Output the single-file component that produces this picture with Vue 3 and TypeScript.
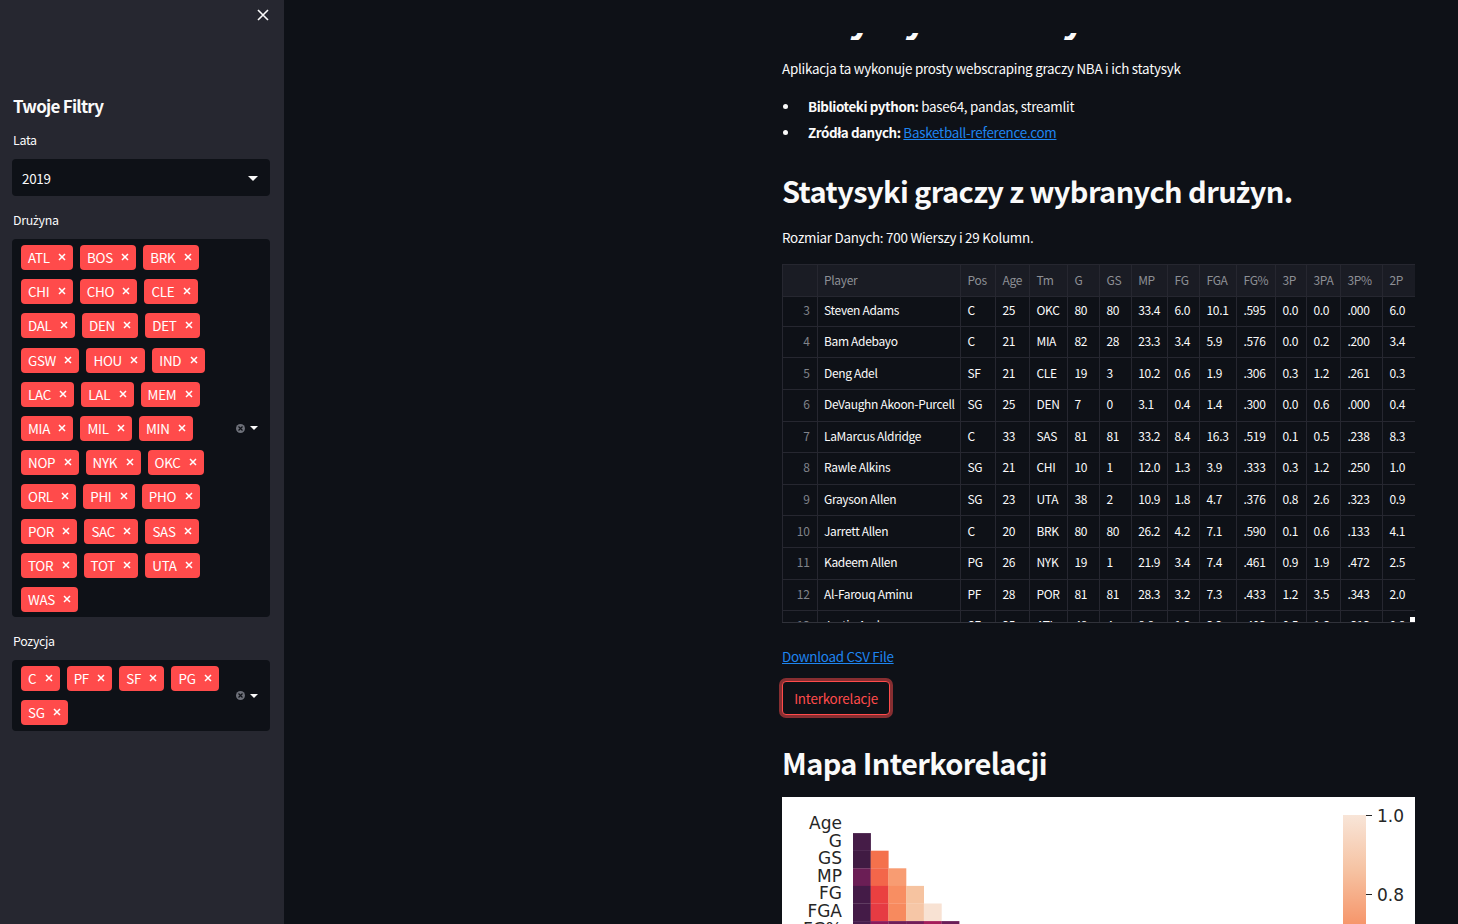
<script setup lang="ts">
const lineA = [
  ['ATL', 'BOS', 'BRK'], ['CHI', 'CHO', 'CLE'], ['DAL', 'DEN', 'DET'], ['GSW', 'HOU', 'IND'],
  ['LAC', 'LAL', 'MEM'], ['MIA', 'MIL', 'MIN'], ['NOP', 'NYK', 'OKC'], ['ORL', 'PHI', 'PHO'],
  ['POR', 'SAC', 'SAS'], ['TOR', 'TOT', 'UTA'], ['WAS'],
]
const teams = lineA.flat()
const positions = ['C', 'PF', 'SF', 'PG', 'SG']

const columns = [
  { label: '', width: 34.5 },
  { label: 'Player', width: 143.5 },
  { label: 'Pos', width: 35 },
  { label: 'Age', width: 34 },
  { label: 'Tm', width: 38 },
  { label: 'G', width: 32 },
  { label: 'GS', width: 31.7 },
  { label: 'MP', width: 36.3 },
  { label: 'FG', width: 32 },
  { label: 'FGA', width: 37 },
  { label: 'FG%', width: 39 },
  { label: '3P', width: 31 },
  { label: '3PA', width: 34 },
  { label: '3P%', width: 42 },
  { label: '2P', width: 33 },
]

const rows = [
  ['3', 'Steven Adams', 'C', '25', 'OKC', '80', '80', '33.4', '6.0', '10.1', '.595', '0.0', '0.0', '.000', '6.0'],
  ['4', 'Bam Adebayo', 'C', '21', 'MIA', '82', '28', '23.3', '3.4', '5.9', '.576', '0.0', '0.2', '.200', '3.4'],
  ['5', 'Deng Adel', 'SF', '21', 'CLE', '19', '3', '10.2', '0.6', '1.9', '.306', '0.3', '1.2', '.261', '0.3'],
  ['6', 'DeVaughn Akoon-Purcell', 'SG', '25', 'DEN', '7', '0', '3.1', '0.4', '1.4', '.300', '0.0', '0.6', '.000', '0.4'],
  ['7', 'LaMarcus Aldridge', 'C', '33', 'SAS', '81', '81', '33.2', '8.4', '16.3', '.519', '0.1', '0.5', '.238', '8.3'],
  ['8', 'Rawle Alkins', 'SG', '21', 'CHI', '10', '1', '12.0', '1.3', '3.9', '.333', '0.3', '1.2', '.250', '1.0'],
  ['9', 'Grayson Allen', 'SG', '23', 'UTA', '38', '2', '10.9', '1.8', '4.7', '.376', '0.8', '2.6', '.323', '0.9'],
  ['10', 'Jarrett Allen', 'C', '20', 'BRK', '80', '80', '26.2', '4.2', '7.1', '.590', '0.1', '0.6', '.133', '4.1'],
  ['11', 'Kadeem Allen', 'PG', '26', 'NYK', '19', '1', '21.9', '3.4', '7.4', '.461', '0.9', '1.9', '.472', '2.5'],
  ['12', 'Al-Farouq Aminu', 'PF', '28', 'POR', '81', '81', '28.3', '3.2', '7.3', '.433', '1.2', '3.5', '.343', '2.0'],
  ['13', 'Justin Anderson', 'SF', '25', 'ATL', '48', '4', '8.8', '1.3', '3.2', '.403', '0.5', '1.6', '.313', '0.8'],
]

const heatLabels = ['Age', 'G', 'GS', 'MP', 'FG', 'FGA', 'FG%']
const heatCells = [
  [],
  ['#451c47'],
  ['#401b43', '#f4714c'],
  ['#6b1e55', '#f3664a', '#f89c72'],
  ['#441b47', '#ea4040', '#f88e62', '#f6c3a0'],
  ['#441b47', '#e63b43', '#f78a5e', '#f6c6a6', '#f8e2d3'],
  ['#461c4c', '#8a1a5b', '#6e1d58', '#721c58', '#a51c5a', '#6b1e58'],
]
</script>

<template>
  <div class="page">
    <aside class="sidebar">
      <div class="sidebar__close">
        <svg width="14" height="14" viewBox="0 0 14 14" fill="none" stroke="#fafafa" stroke-width="1.6">
          <path d="M2 2l10 10M12 2L2 12" />
        </svg>
      </div>
      <h2 class="sidebar__title">Twoje Filtry</h2>

      <label class="field-label">Lata</label>
      <div class="select">
        <span>2019</span>
        <span class="caret caret--select"></span>
      </div>

      <label class="field-label field-label--team">Dru<span class="alt">ż</span>yna</label>
      <div class="multi multi--teams">
        <div class="multi__tags">
          <span v-for="t in teams" :key="t" class="tag">
            {{ t }}
            <svg class="tag__x" width="8" height="8" viewBox="0 0 8 8" fill="none" stroke="#fff" stroke-width="1.5">
              <path d="M1 1l6 6M7 1L1 7" />
            </svg>
          </span>
        </div>
        <div class="multi__controls">
          <span class="clear"><svg width="9" height="9" viewBox="0 0 9 9" fill="none" stroke="#0e1117" stroke-width="1.2"><path d="M2.5 2.5l4 4M6.5 2.5l-4 4" /></svg></span>
          <span class="caret caret--small"></span>
        </div>
      </div>

      <label class="field-label field-label--pos">Pozycja</label>
      <div class="multi multi--pos">
        <div class="multi__tags">
          <span v-for="p in positions" :key="p" class="tag">
            {{ p }}
            <svg class="tag__x" width="8" height="8" viewBox="0 0 8 8" fill="none" stroke="#fff" stroke-width="1.5">
              <path d="M1 1l6 6M7 1L1 7" />
            </svg>
          </span>
        </div>
        <div class="multi__controls">
          <span class="clear"><svg width="9" height="9" viewBox="0 0 9 9" fill="none" stroke="#0e1117" stroke-width="1.2"><path d="M2.5 2.5l4 4M6.5 2.5l-4 4" /></svg></span>
          <span class="caret caret--small"></span>
        </div>
      </div>
    </aside>

    <main class="main">
      <div class="content">
        <div class="title-clip">
          <h1 class="title">Statystyki Koszykówki</h1>
        </div>
        <p class="intro">Aplikacja ta wykonuje prosty webscraping graczy NBA i ich statysyk</p>
        <ul class="facts">
          <li><strong>Biblioteki python:</strong> base64, pandas, streamlit</li>
          <li><strong>Zródła danych:</strong> <a href="#">Basketball-reference.com</a></li>
        </ul>
        <h2 class="heading heading--stats">Statysyki graczy z wybranych dru<span class="alt">ż</span>yn.</h2>
        <p class="size">Rozmiar Danych: 700 Wierszy i 29 Kolumn.</p>

        <div class="table-wrap">
          <table class="table">
            <colgroup>
              <col v-for="c in columns" :key="c.label" :style="{ width: c.width + 'px' }" />
            </colgroup>
            <thead>
              <tr>
                <th v-for="c in columns" :key="c.label">{{ c.label }}</th>
              </tr>
            </thead>
            <tbody>
              <tr v-for="r in rows" :key="r[0]">
                <td v-for="(v, i) in r" :key="i" :class="{ idx: i === 0 }">{{ v }}</td>
              </tr>
            </tbody>
          </table>
          <span class="table-corner"></span>
        </div>

        <a class="download" href="#">Download CSV File</a>
        <button class="btn" type="button">Interkorelacje</button>
        <h2 class="heading heading--map">Mapa Interkorelacji</h2>

        <div class="heatmap">
          <svg width="633" height="300" viewBox="0 0 633 300">
            <text
              v-for="(l, i) in heatLabels"
              :key="l"
              class="heat-label"
              x="60"
              :y="32 + i * 17.6"
              text-anchor="end"
            >{{ l }}</text>
            <template v-for="(row, y) in heatCells" :key="y">
              <rect
                v-for="(fill, x) in row"
                :key="x"
                :x="71 + x * 17.7"
                :y="18.5 + y * 17.6"
                width="17.9"
                height="17.8"
                :fill="fill"
              />
            </template>
            <defs>
              <linearGradient id="cbar" x1="0" y1="0" x2="0" y2="1">
                <stop offset="0" stop-color="#f8e5d8" />
                <stop offset="0.5" stop-color="#f6c3a3" />
                <stop offset="1" stop-color="#f6966b" />
              </linearGradient>
            </defs>
            <rect x="561" y="18" width="23" height="109" fill="url(#cbar)" />
            <path d="M584 18.5h6M584 97.5h6" stroke="#262626" stroke-width="1" />
            <text class="heat-label" x="595" y="25">1.0</text>
            <text class="heat-label" x="595" y="104">0.8</text>
          </svg>
        </div>
      </div>
    </main>
  </div>
</template>

<style>
html, body {
  margin: 0;
  background: #0e1117;
  overflow: hidden;
}
</style>

<style scoped>
.page {
  display: flex;
  height: 100vh;
  overflow: hidden;
  color: #fafafa;
  font-family: "Noto Sans CJK SC", "Noto Sans", sans-serif;
  font-size: 13.4px;
  letter-spacing: -0.25px;
}

.alt {
  font-family: "Noto Sans", sans-serif;
}

.sidebar {
  width: 284px;
  flex: none;
  box-sizing: border-box;
  padding: 0 14px 0 12px;
  background: #262730;
}

.sidebar__close {
  display: flex;
  justify-content: flex-end;
  padding: 8px 0 0;
  height: 14px;
}

.sidebar__title {
  margin: 70px 0 0 1px;
  font-size: 17px;
  letter-spacing: -0.75px;
  line-height: 28px;
  font-weight: 700;
}

.field-label {
  display: block;
  margin: 10px 0 0 1px;
  font-size: 12.4px;
  letter-spacing: -0.3px;
  line-height: 20px;
}

.field-label--team { margin-top: 14px; }
.field-label--pos { margin-top: 14px; }

.select {
  display: flex;
  justify-content: space-between;
  align-items: center;
  height: 37px;
  margin-top: 9px;
  padding: 0 12px 0 10px;
  border-radius: 4px;
  background: #0e1117;
}

.caret {
  width: 0;
  height: 0;
  border-left: 5px solid transparent;
  border-right: 5px solid transparent;
  border-top: 5px solid #fafafa;
}

.caret--select {
  margin: 2px 0 0;
}

.caret--small {
  border-left-width: 4px;
  border-right-width: 4px;
  border-top-width: 4px;
}

.multi {
  display: flex;
  align-items: center;
  margin-top: 8px;
  padding: 6px 12px 5px 9px;
  border-radius: 4px;
  background: #0e1117;
}

.multi--pos {
  margin-top: 9px;
  padding-bottom: 6px;
}

.multi__tags {
  flex: 1;
  display: flex;
  flex-wrap: wrap;
  gap: 9.1px 7px;
  padding-right: 3px;
}

.multi__controls {
  flex: none;
  display: flex;
  align-items: center;
  gap: 5px;
}

.clear {
  display: flex;
  align-items: center;
  justify-content: center;
  width: 9px;
  height: 9px;
  border-radius: 50%;
  background: #6d7079;
}

.tag {
  display: inline-flex;
  align-items: center;
  gap: 8.4px;
  box-sizing: border-box;
  height: 25.1px;
  padding: 0 7px 1px;
  border-radius: 4px;
  background: #ff4b4b;
  color: #fff;
  font-size: 13.4px;
  letter-spacing: -0.3px;
  line-height: 24px;
}

.main {
  flex: 1;
  min-width: 0;
  height: 100vh;
  overflow: hidden;
  display: flex;
  justify-content: flex-end;
  padding-right: 43px;
}

.content {
  width: 633px;
  padding-top: 33px;
}

.title-clip {
  height: 7px;
  overflow: hidden;
}

.title {
  margin: -47px 0 0 -8px;
  font-size: 40px;
  letter-spacing: -1.2px;
  word-spacing: 8px;
  line-height: 56px;
  font-weight: 700;
  color: #fafafa;
}

.intro {
  margin: 18px 0 0;
  line-height: 20px;
}

.facts {
  margin: 18px 0 0;
  padding: 0 0 0 26px;
  list-style: none;
  line-height: 20px;
}

.facts li {
  position: relative;
}

.facts li::before {
  content: "";
  position: absolute;
  left: -25px;
  top: 8px;
  width: 5px;
  height: 5px;
  border-radius: 50%;
  background: #fafafa;
}

.facts strong {
  letter-spacing: -0.43px;
}

.facts li + li {
  margin-top: 6px;
}

.facts a,
.download {
  color: #1f85f0;
  text-decoration: underline;
}

.heading {
  margin: 0;
  font-weight: 700;
  font-size: 29px;
  letter-spacing: -0.6px;
  line-height: 40px;
}

.heading--stats {
  margin-top: 28px;
}

.size {
  margin: 15px 0 0;
  line-height: 20px;
}

.table-wrap {
  position: relative;
  margin-top: 17px;
  height: 358px;
  overflow: hidden;
  border-bottom: 1px solid #30323a;
}

.table {
  width: 633px;
  table-layout: fixed;
  border-collapse: collapse;
  font-size: 12px;
  letter-spacing: -0.33px;
}

.table th,
.table td {
  box-sizing: border-box;
  padding: 0 0 3px 6.5px;
  border: 1px solid #262730;
  text-align: left;
  white-space: nowrap;
  overflow: hidden;
}

.table th {
  height: 32px;
  background: #1a1c24;
  color: #8d8f95;
  font-weight: 400;
}

.table td {
  height: 31.6px;
  color: #fafafa;
}

.table tbody tr:first-child td {
  height: 29.8px;
}

.table td.idx {
  padding: 0 7px 3px 0;
  text-align: right;
  color: #80838a;
}

.table-corner {
  position: absolute;
  right: 0;
  bottom: 0;
  width: 5px;
  height: 5px;
  background: #fff;
}

.download {
  display: block;
  margin-top: 23px;
  line-height: 20px;
}

.btn {
  display: block;
  box-sizing: border-box;
  width: 108px;
  height: 34px;
  margin-top: 15px;
  border: 1px solid #ff4b4b;
  border-radius: 4px;
  background: #0e1117;
  box-shadow: 0 0 0 3px rgba(255, 75, 75, 0.5);
  color: #ff4b4b;
  font: inherit;
  letter-spacing: -0.2px;
  padding: 0;
}

.heading--map {
  margin-top: 27px;
}

.heatmap {
  margin-top: 15px;
  background: #fff;
  height: 300px;
}

.heat-label {
  font-family: "DejaVu Sans", sans-serif;
  font-size: 17px;
  letter-spacing: 0;
  fill: #262626;
}
</style>
